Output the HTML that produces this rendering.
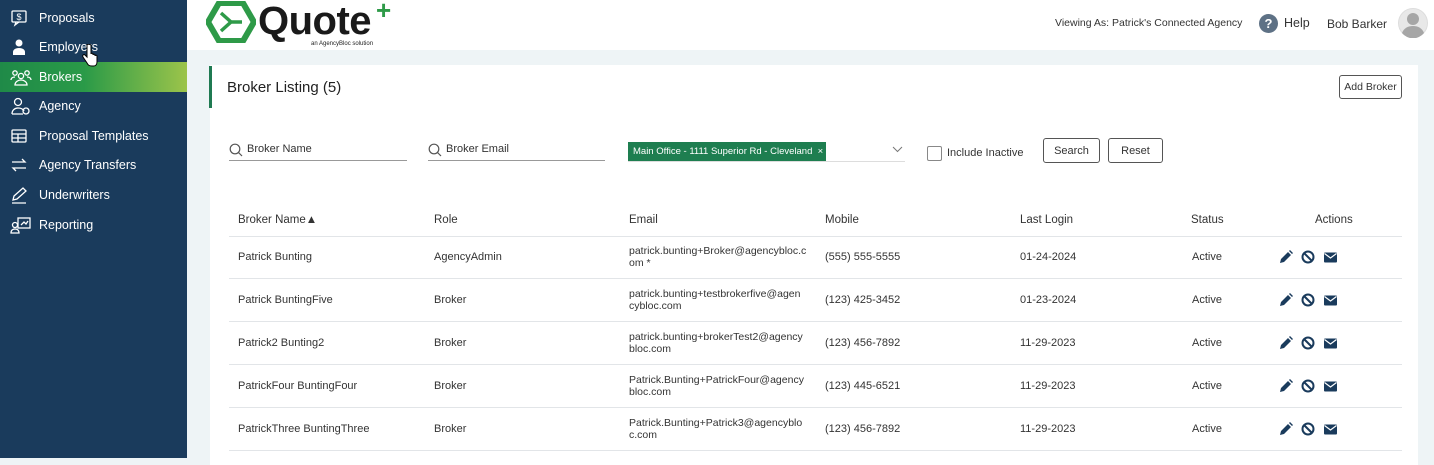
<!DOCTYPE html>
<html><head><meta charset="utf-8"><style>
*{margin:0;padding:0;box-sizing:border-box}
body{width:1434px;height:458px;overflow:hidden;font-family:"Liberation Sans",sans-serif;background:#eef4f6;position:relative;color:#333}
.side{position:absolute;left:0;top:0;width:187px;height:458px;background:#1a3b5c}
.nav{position:absolute;left:0;width:187px;height:30px;color:#fff;font-size:12.5px;display:flex;align-items:center}
.nav span{position:absolute;left:39px}
.nav svg{position:absolute;left:10px;top:6px}
.act{background:linear-gradient(90deg,#1f8a48 0%,#2a9a48 45%,#9cc44a 100%)}
.hdr{position:absolute;left:187px;top:0;width:1247px;height:50px;background:#fff}
.card{position:absolute;left:210px;top:65px;width:1208px;height:400px;background:#fff}
.t{position:absolute;font-size:11px;color:#333;white-space:nowrap}
.line{position:absolute;left:229px;width:1173px;height:1px;background:#e2e5e8}
.btn{position:absolute;border:1px solid #555;border-radius:3px;font-size:11px;color:#333;display:flex;align-items:center;justify-content:center;background:#fff}
.inp{position:absolute;height:1px;background:#999}
</style></head><body>
<div class="side">
 <div class="nav" style="top:3px"><svg width="18" height="18" viewBox="0 0 18 18" fill="none" stroke="#fff" stroke-width="1.3"><rect x="2" y="2" width="14" height="11" rx="1"/><path d="M6 13l-1 3 4-3"/><text x="9" y="11" font-size="9" fill="#fff" stroke="none" text-anchor="middle">$</text></svg><span>Proposals</span></div>
 <div class="nav" style="top:32px"><svg width="18" height="18" viewBox="0 0 18 18" fill="#fff"><circle cx="9" cy="5" r="3.5"/><path d="M3 17v-3c0-2 2-4 6-4s6 2 6 4v3z"/></svg><span>Employers</span></div>
 <div class="nav act" style="top:62px"><svg width="22" height="18" viewBox="0 0 22 18" fill="none" stroke="#fff" stroke-width="1.3"><circle cx="5" cy="5" r="2.2"/><circle cx="17" cy="5" r="2.2"/><circle cx="11" cy="8" r="2.6"/><path d="M1 12c0-2 2-3 4-3M21 12c0-2-2-3-4-3M5 17c0-3 3-5 6-5s6 2 6 5z"/></svg><span>Brokers</span></div>
 <div class="nav" style="top:91px"><svg width="22" height="18" viewBox="0 0 22 18" fill="none" stroke="#fff" stroke-width="1.3"><circle cx="8" cy="5" r="3.5"/><path d="M2 17c0-4 3-6 6-6s5 1 6 3M2 17h11"/><circle cx="16" cy="14" r="3"/></svg><span>Agency</span></div>
 <div class="nav" style="top:121px"><svg width="18" height="18" viewBox="0 0 18 18" fill="none" stroke="#fff" stroke-width="1.3"><rect x="2" y="3" width="14" height="12" rx="1"/><path d="M2 7h14M2 11h14M8 7v8"/></svg><span>Proposal Templates</span></div>
 <div class="nav" style="top:150px"><svg width="18" height="18" viewBox="0 0 18 18" fill="none" stroke="#fff" stroke-width="1.3"><path d="M2 6h13l-3-3M16 12H3l3 3"/></svg><span>Agency Transfers</span></div>
 <div class="nav" style="top:180px"><svg width="18" height="18" viewBox="0 0 18 18" fill="none" stroke="#fff" stroke-width="1.3"><path d="M3 14l1-4 9-8 3 3-9 8zM2 17h14"/></svg><span>Underwriters</span></div>
 <div class="nav" style="top:210px"><svg width="22" height="18" viewBox="0 0 22 18" fill="none" stroke="#fff" stroke-width="1.3"><rect x="8" y="2" width="12" height="10"/><path d="M11 9l3-3 2 2 2-3"/><circle cx="5" cy="9" r="2.5"/><path d="M1 17c0-3 2-4 4-4s4 1 4 4z"/></svg><span>Reporting</span></div>
</div>
<div class="hdr"></div>
<svg style="position:absolute;left:206px;top:1px" width="50" height="42" viewBox="0 0 50 42"><polygon points="13,2 37,2 48,21 37,40 13,40 2,21" fill="none" stroke="#2e9a48" stroke-width="6"/><path d="M15 12l10 9-10 9M25 21h11" stroke="#2e9a48" stroke-width="3.5" fill="none"/></svg>
<div style="position:absolute;left:258px;top:-1px;font-size:40px;font-weight:bold;color:#1a1a1a;letter-spacing:-0.5px;line-height:44px">Quote</div>
<div style="position:absolute;left:376px;top:-5px;font-size:26px;font-weight:bold;color:#2e9a48">+</div>
<div style="position:absolute;left:311px;top:41px;font-size:6px;color:#222">an AgencyBloc solution</div>
<div class="t" style="left:1055px;top:17px;font-size:10.5px">Viewing As: Patrick's Connected Agency</div>
<div style="position:absolute;left:1259px;top:14px;width:19px;height:19px;border-radius:50%;background:#5e7185;color:#fff;font-size:13px;font-weight:bold;text-align:center;line-height:19px">?</div>
<div class="t" style="left:1284px;top:16px;font-size:12.5px">Help</div>
<div class="t" style="left:1327px;top:17px;font-size:12px">Bob Barker</div>
<svg style="position:absolute;left:1398px;top:8px" width="30" height="30" viewBox="0 0 30 30"><circle cx="15" cy="15" r="14.5" fill="#e8e8e8" stroke="#ddd"/><circle cx="15" cy="11" r="6" fill="#a6a6a6"/><path d="M4 25c2-5 6-7 11-7s9 2 11 7a14 14 0 0 1-22 0z" fill="#a6a6a6"/></svg>
<div class="card"></div>
<div style="position:absolute;left:209px;top:66px;width:3px;height:42px;background:#1f7a52"></div>
<div class="t" style="left:227px;top:79px;font-size:15px;color:#222">Broker Listing (5)</div>
<div class="btn" style="left:1339px;top:75px;width:63px;height:24px;font-size:10.5px">Add Broker</div>
<svg style="position:absolute;left:229px;top:143px" width="14" height="14" viewBox="0 0 14 14" fill="none" stroke="#555" stroke-width="1.2"><circle cx="6" cy="6" r="4.8"/><path d="M9.5 9.5l3.5 3.5"/></svg>
<div class="t" style="left:247px;top:143px">Broker Name</div>
<div class="inp" style="left:229px;top:160px;width:178px"></div>
<svg style="position:absolute;left:428px;top:143px" width="14" height="14" viewBox="0 0 14 14" fill="none" stroke="#555" stroke-width="1.2"><circle cx="6" cy="6" r="4.8"/><path d="M9.5 9.5l3.5 3.5"/></svg>
<div class="t" style="left:446px;top:143px">Broker Email</div>
<div class="inp" style="left:428px;top:160px;width:177px"></div>
<div style="position:absolute;left:628px;top:142px;width:198px;height:19px;background:#1e7e50;color:#fff;font-size:9.5px;line-height:19px;padding-left:5px;white-space:nowrap">Main Office - 1111 Superior Rd - Cleveland &nbsp;×</div>
<div class="inp" style="left:628px;top:161px;width:277px;background:#ddd"></div>
<svg style="position:absolute;left:892px;top:146px" width="11" height="7" viewBox="0 0 11 7" fill="none" stroke="#777"><path d="M1 1l4.5 4.5L10 1"/></svg>
<div style="position:absolute;left:927px;top:146px;width:15px;height:15px;border:1px solid #888;border-radius:2px"></div>
<div class="t" style="left:947px;top:147px">Include Inactive</div>
<div class="btn" style="left:1043px;top:138px;width:57px;height:25px">Search</div>
<div class="btn" style="left:1108px;top:138px;width:55px;height:25px">Reset</div>
<div class="t" style="left:238px;top:214px;font-size:11.5px">Broker Name▲</div>
<div class="t" style="left:434px;top:214px;font-size:11.5px">Role</div>
<div class="t" style="left:629px;top:214px;font-size:11.5px">Email</div>
<div class="t" style="left:825px;top:214px;font-size:11.5px">Mobile</div>
<div class="t" style="left:1020px;top:214px;font-size:11.5px">Last Login</div>
<div class="t" style="left:1191px;top:214px;font-size:11.5px">Status</div>
<div class="t" style="left:1315px;top:214px;font-size:11.5px">Actions</div>
<div class="line" style="top:236px"></div>
<div id="rows"></div>
<script>
var d=[["Patrick Bunting","AgencyAdmin","patrick.bunting+Broker@agencybloc.c<br>om *","(555) 555-5555","01-24-2024"],
["Patrick BuntingFive","Broker","patrick.bunting+testbrokerfive@agen<br>cybloc.com","(123) 425-3452","01-23-2024"],
["Patrick2 Bunting2","Broker","patrick.bunting+brokerTest2@agency<br>bloc.com","(123) 456-7892","11-29-2023"],
["PatrickFour BuntingFour","Broker","Patrick.Bunting+PatrickFour@agency<br>bloc.com","(123) 445-6521","11-29-2023"],
["PatrickThree BuntingThree","Broker","Patrick.Bunting+Patrick3@agencyblo<br>c.com","(123) 456-7892","11-29-2023"]];
var h="";d.forEach(function(r,i){var y=236+i*43,c=y+15;
h+='<div class="t" style="left:238px;top:'+c+'px">'+r[0]+'</div><div class="t" style="left:434px;top:'+c+'px">'+r[1]+'</div><div class="t" style="left:629px;top:'+(y+9)+'px;line-height:12px;font-size:10.5px">'+r[2]+'</div><div class="t" style="left:825px;top:'+c+'px">'+r[3]+'</div><div class="t" style="left:1020px;top:'+c+'px">'+r[4]+'</div><div class="t" style="left:1192px;top:'+c+'px">Active</div>'+
'<svg style="position:absolute;left:1279px;top:'+(y+14)+'px" width="60" height="14" viewBox="0 0 60 14"><path d="M1 13l1-4 7-7 3 3-7 7zM10 1l1-1 3 3-1 1z" fill="#1a3b5c"/><circle cx="29" cy="7" r="5.5" fill="none" stroke="#1a3b5c" stroke-width="2"/><path d="M25 3l8 8" stroke="#1a3b5c" stroke-width="2"/><rect x="45" y="2.5" width="13" height="10" rx="1" fill="#1a3b5c"/><path d="M45.5 3.5l6 4.5 6-4.5" stroke="#fff" stroke-width="1.2" fill="none"/></svg>'+
'<div class="line" style="top:'+(y+42)+'px"></div>';});
document.getElementById("rows").innerHTML=h;
</script>
<svg style="position:absolute;left:82px;top:44px" width="16" height="24" viewBox="0 0 16 24"><path d="M5 1v12l-2-2c-1-1-3 0-2 2l4 6c1 2 2 3 5 3h2c2 0 3-2 3-4v-6c0-1-2-1-2 0v-1c0-1-2-1-2 0v-1c0-1-2-1-2 0V1C7 0 5 0 5 1z" fill="#fff" stroke="#000"/></svg>
</body></html>
